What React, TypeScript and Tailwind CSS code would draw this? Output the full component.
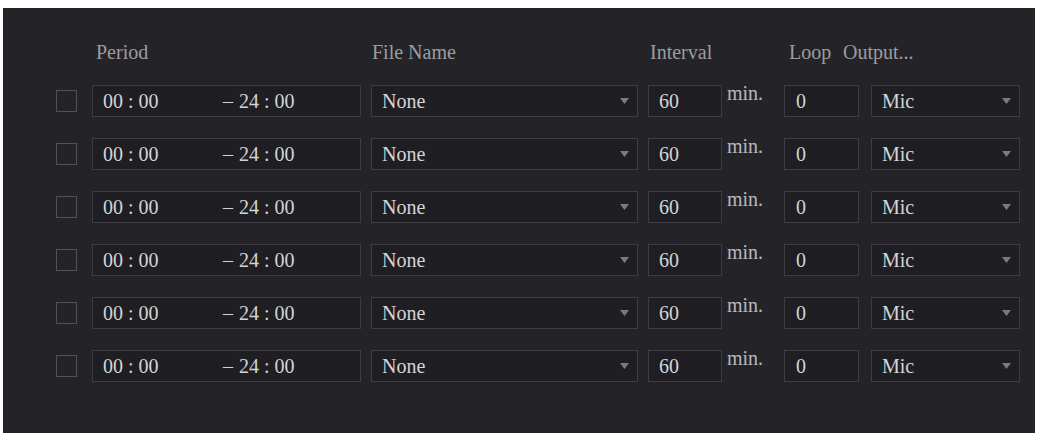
const rows = [0, 1, 2, 3, 4, 5];

function Arrow() {
  return (
    <svg width="9" height="6" viewBox="0 0 9 6" className="shrink-0">
      <path d="M0 0 L9 0 L4.5 6 Z" fill="#7a7a80" />
    </svg>
  );
}

function Row() {
  return (
    <div className="flex items-center h-[32px]">
      <div className="w-[21px] h-[22px] border border-[#505056] mr-[15px]" />
      <div className="w-[269px] h-full border border-[#3c3c42] bg-[#1f1f23] flex items-center pl-[10px] text-[#d4d4d6]">
        <span className="w-[120px]">00 : 00</span>
        <span className="mr-[6px]">–</span>
        <span>24 : 00</span>
      </div>
      <div className="w-[267px] h-full ml-[10px] border border-[#3c3c42] bg-[#1f1f23] flex items-center justify-between pl-[10px] pr-[8px] text-[#d4d4d6]">
        <span>None</span>
        <Arrow />
      </div>
      <div className="w-[74px] h-full ml-[10px] border border-[#3c3c42] bg-[#1f1f23] flex items-center pl-[10px] text-[#d4d4d6]">
        60
      </div>
      <div className="w-[62px] self-start pl-[5px] -mt-[2px] text-[#b8b8bc]">min.</div>
      <div className="w-[75px] h-full border border-[#3c3c42] bg-[#1f1f23] flex items-center pl-[11px] text-[#d4d4d6]">
        0
      </div>
      <div className="w-[149px] h-full ml-[12px] border border-[#3c3c42] bg-[#1f1f23] flex items-center justify-between pl-[10px] pr-[8px] text-[#d4d4d6]">
        <span>Mic</span>
        <Arrow />
      </div>
    </div>
  );
}

export default function App() {
  return (
    <div className="w-[1037px] h-[434px] bg-white pt-[8px] pl-[3px] pr-[2px] pb-[1px] font-['Liberation_Serif',serif] text-[20px] leading-none">
      <div className="h-full bg-[#242428] pl-[53px] pt-[34px]">
        <div className="flex items-center h-[20px] text-[#9c9ca0] mb-[23px]">
          <span className="w-[76px] ml-[40px]">Period</span>
          <span className="w-[200px]" />
          <span className="w-[278px]">File Name</span>
          <span className="w-[139px]">Interval</span>
          <span className="w-[54px]">Loop</span>
          <span>Output...</span>
        </div>
        <div className="flex flex-col gap-[21px]">
          {rows.map((r) => (
            <Row key={r} />
          ))}
        </div>
      </div>
    </div>
  );
}
